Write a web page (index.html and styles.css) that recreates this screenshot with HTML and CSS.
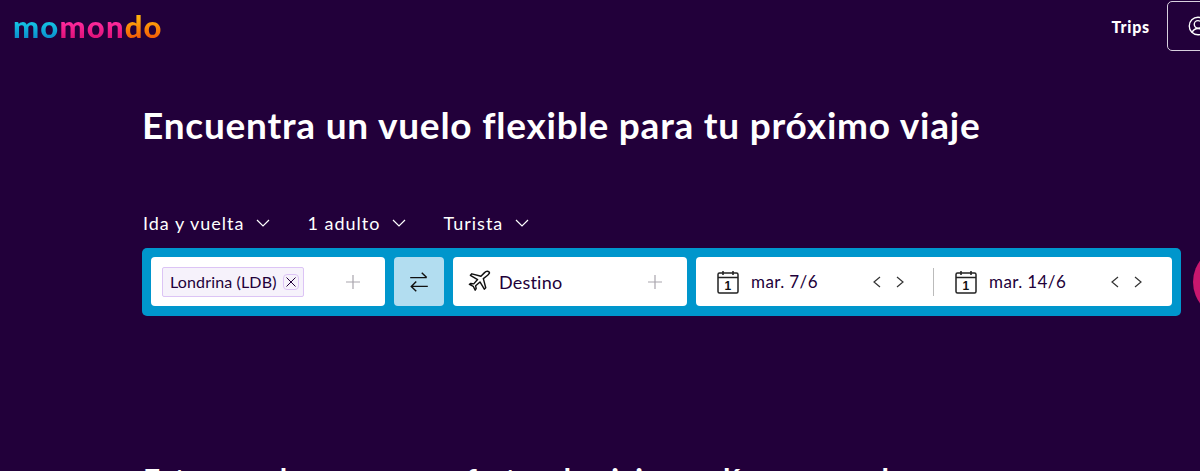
FILE: index.html
```html
<!DOCTYPE html>
<html lang="es">
<head>
    <meta charset="UTF-8">
    <meta name="viewport" content="width=device-width, initial-scale=1.0">
    <title>momondo</title>
    <link rel="stylesheet" href="styles.css">
</head>
<body>
    <div class="page">
        <!-- Top bar -->
        <header class="topbar">
            <div class="logo"><span class="logo-blue">mo</span><span class="logo-pink">mon</span><span class="logo-orange">do</span></div>
            <nav class="topnav">
                <span class="trips">Trips</span>
                <button class="account" aria-label="Cuenta">
                    <svg width="20" height="20" viewBox="0 0 24 24" fill="none" stroke="#fff" stroke-width="1.6">
                        <circle cx="12" cy="12" r="10.500"/>
                        <circle cx="12" cy="10" r="4.500"/>
                        <path d="M5 20c1-3 4-5 7-5s6 2 7 5"/>
                    </svg>
                </button>
            </nav>
        </header>

        <main class="content">
            <h1>Encuentra un vuelo flexible para tu próximo viaje</h1>

            <!-- Trip options -->
            <div class="options">
                <div class="option">Ida y vuelta
                    <svg class="caret" width="14" height="8" viewBox="0 0 14 8"><path d="M1 1l6 6 6-6"/></svg>
                </div>
                <div class="option">1 adulto
                    <svg class="caret" width="14" height="8" viewBox="0 0 14 8"><path d="M1 1l6 6 6-6"/></svg>
                </div>
                <div class="option">Turista
                    <svg class="caret" width="14" height="8" viewBox="0 0 14 8"><path d="M1 1l6 6 6-6"/></svg>
                </div>
            </div>

            <!-- Search form -->
            <div class="search-row">
                <div class="search-bar">
                    <div class="field field-place">
                        <span class="chip">Londrina (LDB)
                            <span class="chip-close">
                                <svg width="12" height="12" viewBox="0 0 12 12"><path d="M1.500 1.500l9 9M10.500 1.500l-9 9"/></svg>
                            </span>
                        </span>
                        <svg class="plus" width="16" height="16" viewBox="0 0 16 16"><path d="M8 1v14M1 8h14"/></svg>
                    </div>
                    <button class="swap" aria-label="Intercambiar">
                        <svg width="22" height="22" viewBox="0 0 20 20"><path d="M2 6h15M12.500 1.500L17 6M18 14H3M7.500 9.500L3 14l4.500 4.500"/></svg>
                    </button>
                    <div class="field field-place field-dest">
                        <svg class="plane" width="23" height="23" viewBox="0 0 24 24"><path d="M22 2c-1.500-1-3.500-.5-5 1l-3.500 3.500L4 4 2.500 5.500l7.500 4.500-4 4.500-3-.5L1.500 15l4 2 2 4 1-1.500-.5-3 4.500-4 4.500 7.500 1.500-1.500L16 9l4.500-3.500C22 4 23 3 22 2z"/></svg>
                        <span class="placeholder">Destino</span>
                        <svg class="plus" width="16" height="16" viewBox="0 0 16 16"><path d="M8 1v14M1 8h14"/></svg>
                    </div>
                    <div class="field field-dates">
                        <div class="date">
                            <svg class="calendar" width="22" height="24" viewBox="0 0 22 24"><rect x="1" y="3" width="20" height="20" rx="1.500"/><path d="M1 7.500h20M6 1v4M16 1v4"/><text x="11" y="20" text-anchor="middle">1</text></svg>
                            <span class="date-text">mar. 7/6</span>
                            <div class="arrows">
                                <svg width="8" height="12" viewBox="0 0 8 12"><path d="M7 1L1 6l6 5"/></svg>
                                <svg width="8" height="12" viewBox="0 0 8 12"><path d="M1 1l6 5-6 5"/></svg>
                            </div>
                        </div>
                        <div class="date-sep"></div>
                        <div class="date">
                            <svg class="calendar" width="22" height="24" viewBox="0 0 22 24"><rect x="1" y="3" width="20" height="20" rx="1.500"/><path d="M1 7.500h20M6 1v4M16 1v4"/><text x="11" y="20" text-anchor="middle">1</text></svg>
                            <span class="date-text">mar. 14/6</span>
                            <div class="arrows">
                                <svg width="8" height="12" viewBox="0 0 8 12"><path d="M7 1L1 6l6 5"/></svg>
                                <svg width="8" height="12" viewBox="0 0 8 12"><path d="M1 1l6 5-6 5"/></svg>
                            </div>
                        </div>
                    </div>
                </div>
                <div class="search-btn"></div>
            </div>

            <h2>Estas son las mayores ofertas de viajes en línea para el mes</h2>
        </main>
    </div>
</body>
</html>
```

FILE: styles.css
```css
html, body {
    margin: 0;
    height: 100%;
    overflow: hidden;
}
body {
    background-color: #22003a;
    color: #fff;
    font-family: Lato, "Open Sans", sans-serif;
}
button {
    padding: 0;
    cursor: pointer;
}
.page {
    width: 1260px;
}

/* top bar */
.topbar {
    display: flex;
    align-items: center;
    justify-content: space-between;
    height: 52px;
    padding-left: 13px;
}
.logo {
    font-size: 31px;
    font-weight: 900;
    letter-spacing: 1.2px;
    line-height: 40px;
}
.logo span {
    -webkit-background-clip: text;
    background-clip: text;
    color: transparent;
}
.logo-blue {
    background-image: linear-gradient(#14c4e4 40%, #0a8ccb 85%);
}
.logo-pink {
    background-image: linear-gradient(#ff2a9c 40%, #dc1076 85%);
}
.logo-orange {
    background-image: linear-gradient(#ffae0c 30%, #f25505 85%);
}
.topnav {
    display: flex;
    align-items: center;
    gap: 17px;
}
.trips {
    font-size: 16px;
    font-weight: 900;
    letter-spacing: .8px;
}
.account {
    display: flex;
    align-items: center;
    width: 93px;
    height: 50px;
    padding-left: 20px;
    background: transparent;
    border: 1px solid #d8d0de;
    border-radius: 5px;
}

/* main */
.content {
    padding-left: 142px;
}
h1 {
    margin: 50px 0 0;
    font-size: 37px;
    line-height: 46px;
    font-weight: 700;
    letter-spacing: .78px;
}
.options {
    display: flex;
    gap: 37px;
    margin-top: 63px;
    padding-left: 1px;
    font-size: 18px;
    line-height: 24px;
    letter-spacing: 1px;
}
.option {
    display: flex;
    align-items: center;
    gap: 12px;
}
.caret {
    fill: none;
    stroke: #fff;
    stroke-width: 1.2;
}
.search-row {
    display: flex;
    align-items: center;
    gap: 12px;
    margin-top: 11px;
}
.search-bar {
    display: flex;
    gap: 9px;
    width: 1022px;
    height: 50px;
    padding: 9px;
    background-color: #0096cc;
    border-radius: 5px;
}
.search-btn {
    flex: none;
    width: 72px;
    height: 72px;
    background-color: #c8176e;
    border-radius: 50%;
}
.field {
    display: flex;
    align-items: center;
    box-sizing: border-box;
    height: 49px;
    background-color: #fff;
    border-radius: 4px;
    color: #22003a;
    font-size: 18px;
    letter-spacing: .2px;
}
.field-place {
    width: 234px;
    padding-left: 11px;
}
.field-dest {
    padding-left: 15px;
}
.chip {
    display: flex;
    align-items: center;
    justify-content: space-between;
    box-sizing: border-box;
    width: 142px;
    height: 30px;
    padding: 0 4px 0 7px;
    background-color: #f6f2fb;
    border: 1px solid #dcc4f5;
    border-radius: 2px;
    font-size: 16px;
    letter-spacing: .15px;
    white-space: nowrap;
}
.chip-close {
    display: flex;
    align-items: center;
    justify-content: center;
    width: 14px;
    height: 14px;
    border: 1px solid #dcc4f5;
    border-radius: 4px;
}
.chip-close svg {
    fill: none;
    stroke: #22003a;
    stroke-width: 1;
}
.plus {
    margin-left: auto;
    margin-right: 24px;
    fill: none;
    stroke: #a9a5ad;
    stroke-width: 1.200;
}
.swap {
    display: flex;
    align-items: center;
    justify-content: center;
    width: 50px;
    height: 49px;
    background-color: #b2ddf0;
    border: none;
    border-radius: 4px;
}
.swap svg {
    fill: none;
    stroke: #111;
    stroke-width: 1.300;
}
.plane {
    flex: none;
    margin-right: 8px;
    fill: #fff;
    stroke: #111;
    stroke-width: 1.500;
    stroke-linejoin: round;
}
.field-dates {
    width: 476px;
    padding-left: 21px;
    font-size: 17px;
    letter-spacing: .4px;
}
.date {
    display: flex;
    flex: none;
    align-items: center;
    width: 195px;
}
.date-sep {
    flex: none;
    width: 1px;
    height: 28px;
    margin: 0 21px;
    background-color: #bbb;
}
.calendar {
    flex: none;
    margin-right: 12px;
    fill: none;
    stroke: #222;
    stroke-width: 1.500;
}
.calendar text {
    fill: #111;
    stroke: none;
    font: 700 12px "Liberation Sans", sans-serif;
}
.date-text {
    flex: none;
    width: 122px;
}
.arrows {
    display: flex;
    gap: 15px;
}
.arrows svg {
    fill: none;
    stroke: #333;
    stroke-width: 1.200;
}
h2 {
    margin: 141px 0 0;
    padding-left: 1px;
    font-size: 30px;
    line-height: 40px;
    font-weight: 700;
    letter-spacing: .5px;
    white-space: nowrap;
}
```
